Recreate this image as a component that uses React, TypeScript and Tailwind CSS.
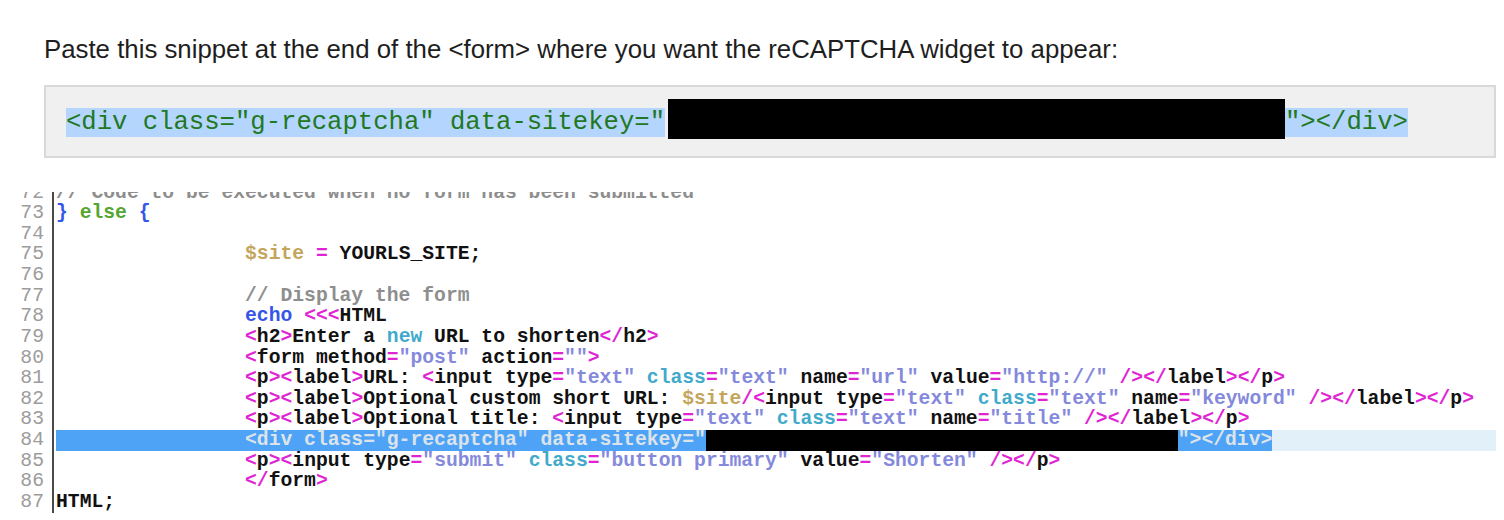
const COLORS = {
  k: "text-[#111111]",
  c: "text-[#8e8e8e]",
  b: "text-[#3556e8]",
  g: "text-[#55a630]",
  y: "text-[#c4a55c]",
  m: "text-[#e024d4]",
  v: "text-[#8489dc]",
  t: "text-[#41aacb]",
} as const;

type Tok = [keyof typeof COLORS, string];

const IND = "                ";

const lines: { n: number; toks: Tok[] }[] = [
  { n: 72, toks: [["c", "// Code to be executed when no form has been submitted"]] },
  { n: 73, toks: [["b", "}"], ["k", " "], ["g", "else"], ["k", " "], ["b", "{"]] },
  { n: 74, toks: [] },
  { n: 75, toks: [["k", IND], ["y", "$site"], ["k", " "], ["m", "="], ["k", " YOURLS_SITE;"]] },
  { n: 76, toks: [] },
  { n: 77, toks: [["k", IND], ["c", "// Display the form"]] },
  { n: 78, toks: [["k", IND], ["b", "echo"], ["k", " "], ["m", "<<<"], ["k", "HTML"]] },
  {
    n: 79,
    toks: [
      ["k", IND], ["m", "<"], ["k", "h2"], ["m", ">"], ["k", "Enter a "], ["t", "new"],
      ["k", " URL to shorten"], ["m", "</"], ["k", "h2"], ["m", ">"],
    ],
  },
  {
    n: 80,
    toks: [
      ["k", IND], ["m", "<"], ["k", "form method"], ["m", "="], ["v", '"post"'],
      ["k", " action"], ["m", "="], ["v", '""'], ["m", ">"],
    ],
  },
  {
    n: 81,
    toks: [
      ["k", IND], ["m", "<"], ["k", "p"], ["m", "><"], ["k", "label"], ["m", ">"], ["k", "URL: "],
      ["m", "<"], ["k", "input type"], ["m", "="], ["v", '"text"'], ["k", " "], ["t", "class"],
      ["m", "="], ["v", '"text"'], ["k", " name"], ["m", "="], ["v", '"url"'], ["k", " value"],
      ["m", "="], ["v", '"http://"'], ["k", " "], ["m", "/></"], ["k", "label"], ["m", "></"],
      ["k", "p"], ["m", ">"],
    ],
  },
  {
    n: 82,
    toks: [
      ["k", IND], ["m", "<"], ["k", "p"], ["m", "><"], ["k", "label"], ["m", ">"],
      ["k", "Optional custom short URL: "], ["y", "$site"], ["m", "/<"], ["k", "input type"],
      ["m", "="], ["v", '"text"'], ["k", " "], ["t", "class"], ["m", "="], ["v", '"text"'],
      ["k", " name"], ["m", "="], ["v", '"keyword"'], ["k", " "], ["m", "/></"], ["k", "label"],
      ["m", "></"], ["k", "p"], ["m", ">"],
    ],
  },
  {
    n: 83,
    toks: [
      ["k", IND], ["m", "<"], ["k", "p"], ["m", "><"], ["k", "label"], ["m", ">"],
      ["k", "Optional title: "], ["m", "<"], ["k", "input type"], ["m", "="], ["v", '"text"'],
      ["k", " "], ["t", "class"], ["m", "="], ["v", '"text"'], ["k", " name"], ["m", "="],
      ["v", '"title"'], ["k", " "], ["m", "/></"], ["k", "label"], ["m", "></"], ["k", "p"], ["m", ">"],
    ],
  },
  { n: 84, toks: [] },
  {
    n: 85,
    toks: [
      ["k", IND], ["m", "<"], ["k", "p"], ["m", "><"], ["k", "input type"], ["m", "="],
      ["v", '"submit"'], ["k", " "], ["t", "class"], ["m", "="], ["v", '"button primary"'],
      ["k", " value"], ["m", "="], ["v", '"Shorten"'], ["k", " "], ["m", "/></"], ["k", "p"], ["m", ">"],
    ],
  },
  { n: 86, toks: [["k", IND], ["m", "</"], ["k", "form"], ["m", ">"]] },
  { n: 87, toks: [["k", "HTML;"]] },
];

function SelectedLine() {
  // line 84: selection + redacted site key, current-line tint after it
  return (
    <div className="flex h-full w-[1440px] bg-[#e1f0f9] text-[#dde3ea]">
      <span className="bg-[#4ea3f6]">{IND}</span>
      <span className="bg-[#4ea3f6]">{'<div class="g-recaptcha" data-sitekey="'}</span>
      <div className="h-full w-[472px] bg-black" />
      <span className="bg-[#4ea3f6]">{'"></div>'}</span>
    </div>
  );
}

function Editor() {
  return (
    <div className="mt-[34px] h-[321px] overflow-hidden font-['Liberation_Mono',monospace] text-[19.7px]">
      <div className="-mt-[9.5px]">
        {lines.map((l) => (
          <div key={l.n} className="flex h-[20.64px] leading-[20.64px] whitespace-pre">
            <div className="w-[54px] shrink-0 border-r-2 border-[#4a4a4a] pr-[8px] text-right text-[#9c9c9c]">
              {l.n}
            </div>
            <div className="ml-[2px] font-bold">
              {l.n === 84 ? (
                <SelectedLine />
              ) : (
                l.toks.map((t, i) => (
                  <span key={i} className={COLORS[t[0]]}>
                    {t[1]}
                  </span>
                ))
              )}
            </div>
          </div>
        ))}
      </div>
    </div>
  );
}

export default function App() {
  return (
    <div className="h-[520px] w-[1504px] overflow-hidden bg-white font-['Liberation_Sans',Arial,sans-serif]">
      <p className="pl-[44px] pt-[35px] text-[25.8px] leading-[29px] text-[#1e1e1e]">
        Paste this snippet at the end of the &lt;form&gt; where you want the reCAPTCHA widget to appear:
      </p>

      <div className="ml-[44px] mt-[21px] h-[73px] w-[1452px] border-2 border-[#d9d9d9] bg-[#f0f0f0] pl-[20px] pt-[21px]">
        <div className="flex items-start whitespace-pre font-['Liberation_Mono',monospace] text-[25.6px] leading-[29px] text-[#217821]">
          <span className="bg-[#b4d5fe]">{'<div class="g-recaptcha" data-sitekey="'}</span>
          <div className="-mt-[9px] ml-[3px] h-[40px] w-[617px] bg-black" />
          <span className="bg-[#b4d5fe]">{'"></div>'}</span>
        </div>
      </div>

      <Editor />
    </div>
  );
}
